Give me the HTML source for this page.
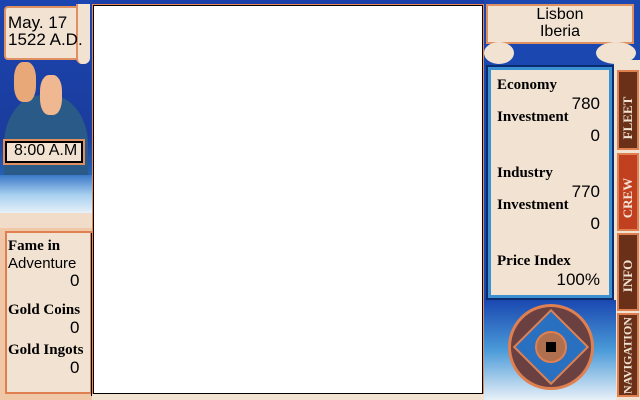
<!DOCTYPE html>
<html><head><meta charset="utf-8"><style>
*{margin:0;padding:0;box-sizing:border-box}
body{width:640px;height:400px;overflow:hidden;background:#1a3fa8;position:relative;font-family:"Liberation Mono",monospace}
.a{position:absolute}
.g{font-family:"Liberation Serif",serif;font-weight:bold;color:#000}
.m{font-family:"Liberation Sans",sans-serif;color:#000}
</style></head><body>
<!-- left art -->
<div class="a" style="left:0;top:0;width:93px;height:230px;background:linear-gradient(#1c44b0,#1a3c9c 60%,#2a6ab8 80%,#e8f0f8)"></div>
<div class="a" style="left:4px;top:95px;width:84px;height:110px;background:#2a5a88;border-radius:45% 45% 10% 10%"></div>
<div class="a" style="left:14px;top:62px;width:22px;height:40px;background:#e8a878;border-radius:40%"></div>
<div class="a" style="left:40px;top:75px;width:22px;height:40px;background:#f0b890;border-radius:40%"></div>
<div class="a" style="left:0;top:175px;width:93px;height:40px;background:linear-gradient(#3a78c8,#a8d0f0,#eef4fa)"></div>
<div class="a" style="left:0;top:213px;width:93px;height:17px;background:#f0dcc8"></div>
<div class="a" style="left:4px;top:6px;width:80px;height:54px;background:#f2e2d2;border:2px solid #e09060;border-radius:4px"></div>
<div class="a" style="left:76px;top:4px;width:14px;height:60px;background:#f2e2d2;border-left:2px solid #e09060;border-radius:0 0 6px 6px"></div>
<div class="a m" style="left:8px;top:14px;font-size:17px;line-height:17px">May. 17<br>1522 A.D.</div>
<div class="a" style="left:5px;top:141px;width:78px;height:22px;background:#f2e2d2;border:2px solid #000;outline:2px solid #e09060"></div>
<div class="a m" style="left:14px;top:142px;font-size:16px">8:00 A.M</div>
<!-- left stats -->
<div class="a" style="left:0;top:228px;width:93px;height:172px;background:#f0c8a8"></div>
<div class="a" style="left:5px;top:231px;width:87px;height:163px;background:#f2e2d2;border:2px solid #e08050"></div>
<div class="a" style="left:91px;top:233px;width:2px;height:163px;background:#000"></div>
<div class="a g" style="left:8px;top:238px;font-size:15px;line-height:17px">Fame in</div>
<div class="a m" style="left:8px;top:255px;font-size:15px">Adventure</div>
<div class="a m" style="left:70px;top:271px;font-size:17px">0</div>
<div class="a g" style="left:8px;top:302px;font-size:15px">Gold Coins</div>
<div class="a m" style="left:70px;top:318px;font-size:17px">0</div>
<div class="a g" style="left:8px;top:342px;font-size:15px">Gold Ingots</div>
<div class="a m" style="left:70px;top:358px;font-size:17px">0</div>
<!-- center -->
<div class="a" style="left:92px;top:4px;width:392px;height:392px;background:#e88850"></div>
<div class="a" style="left:93px;top:5px;width:390px;height:389px;background:#fff;border:1px solid #000"></div>
<div class="a" style="left:92px;top:394px;width:392px;height:6px;background:#f2e2d2"></div>
<!-- right -->
<div class="a" style="left:484px;top:0;width:156px;height:400px;background:#1a48b0"></div>
<div class="a" style="left:486px;top:4px;width:148px;height:40px;background:#f2e2d2;border:2px solid #e09060"></div>
<div class="a m" style="left:486px;top:6px;width:148px;text-align:center;font-size:16px;line-height:17px">Lisbon<br>Iberia</div>
<div class="a" style="left:484px;top:42px;width:30px;height:22px;background:#f2e2d2;border-radius:50%"></div>
<div class="a" style="left:596px;top:42px;width:40px;height:22px;background:#f2e2d2;border-radius:50%"></div>
<div class="a" style="left:486px;top:65px;width:128px;height:235px;background:#3a90d0;border:2px solid #0c2c70"></div>
<div class="a" style="left:491px;top:70px;width:118px;height:225px;background:#f2e2d2"></div>
<div class="a g" style="left:497px;top:77px;font-size:15px">Economy</div>
<div class="a m" style="left:560px;top:94px;width:40px;text-align:right;font-size:17px">780</div>
<div class="a g" style="left:497px;top:109px;font-size:15px">Investment</div>
<div class="a m" style="left:560px;top:126px;width:40px;text-align:right;font-size:17px">0</div>
<div class="a g" style="left:497px;top:165px;font-size:15px">Industry</div>
<div class="a m" style="left:560px;top:182px;width:40px;text-align:right;font-size:17px">770</div>
<div class="a g" style="left:497px;top:197px;font-size:15px">Investment</div>
<div class="a m" style="left:560px;top:214px;width:40px;text-align:right;font-size:17px">0</div>
<div class="a g" style="left:497px;top:253px;font-size:15px">Price Index</div>
<div class="a m" style="left:555px;top:270px;width:45px;text-align:right;font-size:17px">100%</div>
<!-- tabs -->
<div class="a" style="left:614px;top:60px;width:26px;height:340px;background:#f2e2d2"></div>
<div class="a" style="left:617px;top:70px;width:22px;height:80px;background:#6a3018;border:2px solid #e08050"></div>
<div class="a" style="left:617px;top:153px;width:22px;height:78px;background:#c04020;border:2px solid #e08050"></div>
<div class="a" style="left:617px;top:233px;width:22px;height:78px;background:#6a3018;border:2px solid #e08050"></div>
<div class="a" style="left:617px;top:313px;width:22px;height:84px;background:#6a3018;border:2px solid #e08050"></div>
<div class="a g" style="left:618px;top:110px;width:20px;transform:rotate(-90deg);color:#f2e2d2;font-size:13px;white-space:nowrap;display:flex;justify-content:center">FLEET</div>
<div class="a g" style="left:618px;top:190px;width:20px;transform:rotate(-90deg);color:#f2e2d2;font-size:13px;white-space:nowrap;display:flex;justify-content:center">CREW</div>
<div class="a g" style="left:618px;top:268px;width:20px;transform:rotate(-90deg);color:#f2e2d2;font-size:13px;white-space:nowrap;display:flex;justify-content:center">INFO</div>
<div class="a g" style="left:618px;top:348px;width:20px;transform:rotate(-90deg);color:#f2e2d2;font-size:12px;white-space:nowrap;display:flex;justify-content:center">NAVIGATION</div>
<!-- compass -->
<div class="a" style="left:484px;top:300px;width:132px;height:100px;background:linear-gradient(#1a48b0,#4a9ad8 50%,#e8f0f8)"></div>
<div class="a" style="left:508px;top:304px;width:86px;height:86px;border-radius:50%;background:#6a4040;border:3px solid #e08050"></div>
<div class="a" style="left:524px;top:320px;width:54px;height:54px;transform:rotate(45deg);background:#2a70c0;border:2px solid #e08050"></div>
<div class="a" style="left:535px;top:331px;width:32px;height:32px;border-radius:50%;background:#b07050;border:2px solid #e08050"></div>
<div class="a" style="left:546px;top:342px;width:10px;height:10px;background:#000"></div>
</body></html>
